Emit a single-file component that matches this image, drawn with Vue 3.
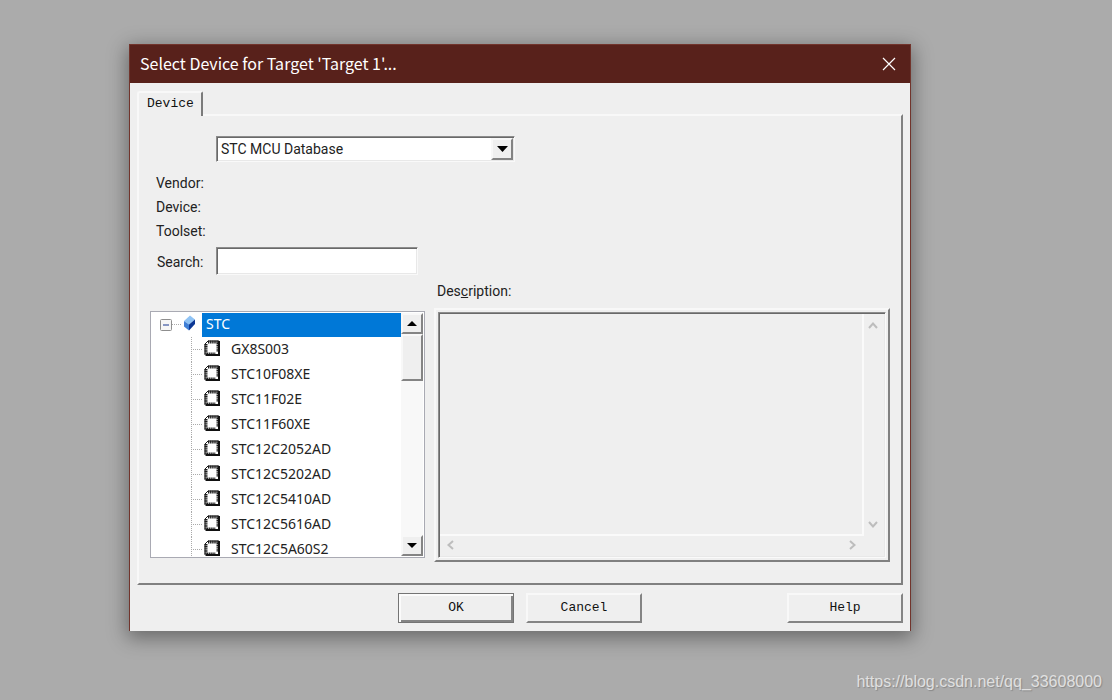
<script setup>
import { ref } from 'vue'

const databases = ['STC MCU Database']
const database = ref(databases[0])
const search = ref('')
const description = ref('')
const fields = ['Vendor:', 'Device:', 'Toolset:']
const devices = [
  'GX8S003',
  'STC10F08XE',
  'STC11F02E',
  'STC11F60XE',
  'STC12C2052AD',
  'STC12C5202AD',
  'STC12C5410AD',
  'STC12C5616AD',
  'STC12C5A60S2',
]
</script>

<template>
  <main class="desktop">
    <section class="dialog" role="dialog" aria-labelledby="dialog-title">
      <header class="titlebar">
        <h1 id="dialog-title">Select Device for Target 'Target 1'...</h1>
        <button class="close" type="button" aria-label="Close">
          <svg width="14" height="14" viewBox="0 0 14 14">
            <path d="M1 1L13 13M13 1L1 13" stroke="#fff" stroke-width="1.2" fill="none" />
          </svg>
        </button>
      </header>

      <div class="body">
        <div class="tabs" role="tablist">
          <button class="tab" type="button" role="tab" aria-selected="true">Device</button>
        </div>

        <div class="panel" role="tabpanel">
          <div class="combo sunken">
            <select v-model="database" aria-label="Database">
              <option v-for="name in databases" :key="name">{{ name }}</option>
            </select>
            <span class="combo-arrow raised">
              <svg width="11" height="6" viewBox="0 0 11 6"><path d="M0 0H11L5.500 6Z" /></svg>
            </span>
          </div>

          <div class="fields">
            <div v-for="field in fields" :key="field" class="field">{{ field }}</div>
          </div>

          <div class="search">
            <label for="search">Search:</label>
            <input id="search" v-model="search" class="sunken" type="text" />
          </div>

          <div class="lower">
            <div class="tree-box">
              <ul class="tree" role="tree" aria-label="Devices">
                <li class="root" role="treeitem" aria-selected="true" aria-expanded="true">
                  <button class="toggle" type="button" aria-label="Collapse STC">
                    <svg width="12" height="12" viewBox="0 0 12 12">
                      <rect x="0.500" y="0.500" width="11" height="11" rx="1" fill="#f6f6f6" stroke="#8e8e8e" />
                      <path d="M3 6H9" stroke="#4a62a8" stroke-width="1.300" />
                    </svg>
                  </button>
                  <span class="link"></span>
                  <svg class="gem" width="13" height="16" viewBox="0 0 13 16">
                    <path d="M7 0.500L12 4.500L6 9.500L1 6Z" fill="#8fc3f5" />
                    <path d="M1 6L6 9.500V15.500L1 11.500Z" fill="#3f7fd6" />
                    <path d="M12 4.500V9L6 15.500V9.500Z" fill="#0b3795" />
                  </svg>
                  <span class="selected">STC</span>
                </li>
                <li v-for="device in devices" :key="device" class="leaf" role="treeitem">
                  <svg class="chip" width="16" height="16" viewBox="0 0 16 16">
                    <path d="M4 0.500H15.500V15.500H0.500V4Z" fill="#fff" />
                    <path d="M4 2H14M2 4V14M14 3V12M3 14H12" fill="none" stroke="#1a1a1a" stroke-width="3" stroke-dasharray="1.400 0.700" />
                    <path d="M4 1H15V15H1V4Z" fill="none" stroke="#1a1a1a" stroke-width="1" />
                    <path d="M15 1V15H2" fill="none" stroke="#111" stroke-width="2" />
                    <path d="M11.500 12H14V14H11.500Z" fill="#fff" />
                  </svg>
                  <span>{{ device }}</span>
                </li>
              </ul>
              <div class="scrollbar">
                <button class="raised step" type="button" aria-label="Scroll up">
                  <svg width="10" height="5" viewBox="0 0 10 5"><path d="M0 5H10L5 0Z" /></svg>
                </button>
                <div class="raised thumb"></div>
                <div class="track"></div>
                <button class="raised step" type="button" aria-label="Scroll down">
                  <svg width="10" height="5" viewBox="0 0 10 5"><path d="M0 0H10L5 5Z" /></svg>
                </button>
              </div>
            </div>

            <div class="description">
              <label for="description">Des<u>c</u>ription:</label>
              <div class="frame">
                <div class="memo">
                  <textarea id="description" v-model="description" readonly></textarea>
                  <div class="vbar">
                    <svg width="10" height="8" viewBox="0 0 10 8"><path d="M1 7L5 2.500L9 7" /></svg>
                    <svg width="10" height="8" viewBox="0 0 10 8"><path d="M1 1L5 5.500L9 1" /></svg>
                  </div>
                  <div class="hbar">
                    <svg width="8" height="10" viewBox="0 0 8 10"><path d="M7 1L2.500 5L7 9" /></svg>
                    <svg width="8" height="10" viewBox="0 0 8 10"><path d="M1 1L5.500 5L1 9" /></svg>
                  </div>
                </div>
              </div>
            </div>
          </div>
        </div>

        <footer class="actions">
          <button class="default" type="button">OK</button>
          <button class="raised" type="button">Cancel</button>
          <button class="raised help" type="button">Help</button>
        </footer>
      </div>
    </section>
    <div class="watermark">https://blog.csdn.net/qq_33608000</div>
  </main>
</template>

<style>
body {
  margin: 0;
  background: #ababab;
}
</style>

<style scoped>
* {
  box-sizing: border-box;
}
button,
input,
select,
textarea {
  margin: 0;
  padding: 0;
  border: 0;
  border-radius: 0;
  outline: 0;
  color: inherit;
  font: inherit;
}
svg {
  display: block;
  flex: none;
}
.desktop {
  position: relative;
  display: flex;
  min-height: 100vh;
  padding: 44px 201px 69px 129px;
  background: #ababab;
  color: #222;
  font: 14px/18px Roboto, "Liberation Sans", sans-serif;
}
.dialog {
  display: flex;
  flex: 1;
  flex-direction: column;
  min-width: 0;
  border: 1px solid #71342c;
  border-bottom: 0;
  background: #efefef;
  box-shadow: 0 5px 18px 2px rgba(0, 0, 0, 0.38);
}
.titlebar {
  display: flex;
  align-items: center;
  justify-content: space-between;
  height: 38px;
  padding: 0 14px 0 10px;
  background: #58211b;
  color: #fff;
}
h1 {
  margin: 0;
  padding-bottom: 2px;
  font: 16px/24px "Noto Sans CJK SC", "Noto Sans", sans-serif;
}
.close {
  background: none;
}
.body {
  display: flex;
  flex: 1;
  flex-direction: column;
  padding: 8px 7px;
}
.tabs {
  display: flex;
  z-index: 1;
  margin-bottom: -2px;
}
.tab {
  height: 25px;
  padding: 0 7px 1px 8px;
  border: 2px solid #f8f8f8;
  border-right-color: #7b7b7b;
  border-bottom: 0;
  border-radius: 3px 2px 0 0;
  background: #efefef;
  color: #111;
  font: 13px/16px "Liberation Mono", monospace;
}
.panel {
  display: flex;
  flex: 1;
  flex-direction: column;
  padding: 20px 11px 21px;
  border: 2px solid;
  border-color: #f8f8f8 #808080 #808080 #f8f8f8;
}
.raised {
  border: 2px solid;
  border-color: #f8f8f8 #848484 #848484 #f8f8f8;
  background: #efefef;
}
.sunken {
  padding: 1px 0 0 1px;
  border: 1px solid;
  border-color: #8c8c8c #f9f9f9 #f9f9f9 #8c8c8c;
  background: #fff;
  box-shadow: inset 1px 1px #696969, inset -1px -1px #e8e8e8;
}
.combo {
  display: flex;
  width: 299px;
  height: 26px;
  margin-left: 66px;
  padding: 1px;
}
.combo select {
  flex: 1;
  padding-left: 3px;
  appearance: none;
  background: #fff;
}
.combo-arrow {
  display: flex;
  align-items: center;
  justify-content: center;
  width: 22px;
}
.fields {
  margin-top: 9px;
}
.field {
  height: 24px;
  padding-left: 6px;
  line-height: 24px;
}
.search {
  display: flex;
  align-items: center;
  margin-top: 4px;
}
.search label {
  width: 66px;
  padding: 1px 0 0 7px;
}
.search input {
  width: 202px;
  height: 28px;
}
.lower {
  display: grid;
  flex: 1;
  grid-template-columns: 275fr 456fr;
  gap: 9px;
}
.tree-box {
  display: flex;
  margin: 36px 0 4px;
  border: 1px solid #a9aab3;
  background: #fff;
  contain: size;
}
.tree {
  flex: 1;
  margin: 0;
  padding: 0;
  overflow: hidden;
  font: 14px/14px "Noto Sans", sans-serif;
  list-style: none;
}
.root {
  display: flex;
  align-items: center;
  height: 25px;
  padding-left: 9px;
}
.toggle {
  background: none;
}
.link {
  width: 10px;
  height: 1px;
  background: repeating-linear-gradient(90deg, #aaa 0 1px, #fff 1px 2px);
}
.gem {
  margin: 0 0 4px 1px;
}
.selected {
  flex: 1;
  align-self: end;
  height: 24px;
  margin-left: 6px;
  padding-left: 4px;
  background: #0078d7;
  color: #fff;
  line-height: 22px;
}
.leaf {
  display: flex;
  align-items: center;
  height: 25px;
  margin-left: 40px;
  background:
    repeating-linear-gradient(180deg, #aaa 0 1px, #fff 1px 2px) left / 1px 100% no-repeat,
    repeating-linear-gradient(90deg, #aaa 0 1px, #fff 1px 2px) left / 12px 1px no-repeat;
}
.leaf span {
  padding-bottom: 2px;
}
.chip {
  margin: 0 11px 4px 13px;
}
.scrollbar {
  display: flex;
  flex-direction: column;
  width: 23px;
  padding: 1px 1px 1px 0;
}
.step {
  display: flex;
  align-items: center;
  justify-content: center;
  height: 21px;
}
.thumb {
  height: 47px;
}
.track {
  flex: 1;
  background: #f8f8f8;
}
.description {
  display: flex;
  flex-direction: column;
}
.description label {
  padding: 7px 3px 8px;
}
.frame {
  display: flex;
  flex: 1;
  padding: 2px;
  border: 2px solid;
  border-color: #f8f8f8 #808080 #808080 #f8f8f8;
}
.memo {
  display: grid;
  flex: 1;
  grid-template: 1fr 20px / 1fr 20px;
  padding: 1px;
  border: 1px solid;
  border-color: #8c8c8c #fafafa #fafafa #8c8c8c;
  box-shadow: inset 1px 1px #696969, inset -1px -1px #e8e8e8;
}
.memo textarea {
  width: 100%;
  height: 100%;
  border-right: 2px solid #fafafa;
  border-bottom: 2px solid #fafafa;
  background: #efefef;
  resize: none;
}
.memo path {
  fill: none;
  stroke: #bdbdbd;
  stroke-width: 2;
}
.vbar,
.hbar {
  display: flex;
  align-items: center;
  justify-content: space-between;
}
.vbar {
  flex-direction: column;
  padding: 7px 2px 7px 0;
}
.hbar {
  padding: 0 7px 2px 6px;
}
.actions {
  display: flex;
  gap: 12px;
  padding: 8px 0 0 261px;
  color: #111;
  font: 13px/16px "Liberation Mono", monospace;
}
.actions button {
  width: 116px;
  height: 30px;
}
.actions .default {
  border: 1px solid #747474;
  background: #efefef;
  box-shadow: inset 2px 2px #fbfbfb, inset -2px -2px #848484;
}
.actions .help {
  margin-left: auto;
}
.watermark {
  position: absolute;
  right: 10px;
  bottom: 8px;
  color: #e0e0e0;
  font: 16px/20px "Liberation Sans", sans-serif;
  text-shadow: 1px 1px 1px #888;
}
</style>
